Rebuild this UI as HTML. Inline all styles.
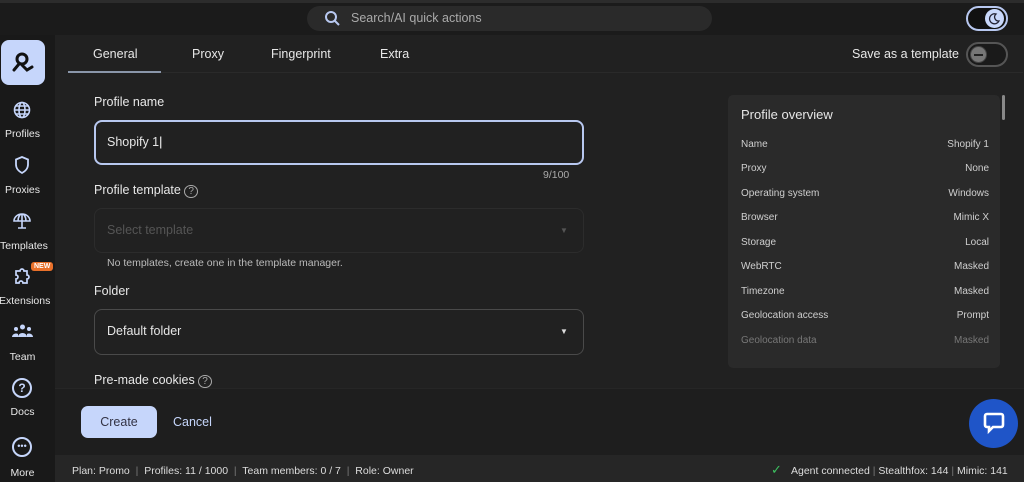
<!DOCTYPE html>
<html><head><meta charset="utf-8"><style>
*{box-sizing:border-box;margin:0;padding:0}
body{width:1024px;height:482px;background:#181818;font-family:"Liberation Sans",sans-serif;color:#e6e6e6;position:relative;overflow:hidden;font-size:13px}
.a{position:absolute}
.top{left:0;top:0;width:1024px;height:35px;background:#1b1b1b;border-top:3px solid #2c2c2c}
.side{left:0;top:35px;width:55px;height:447px;background:#191919}
.main{left:55px;top:35px;width:969px;height:420px;background:#212121}
.foot{left:55px;top:388px;width:969px;height:67px;background:#1e1e1e;border-top:1px solid #262626}
.status{left:55px;top:455px;width:969px;height:27px;background:#262626;font-size:11px;color:#ddd}
.nav{width:45px;text-align:center;font-size:10.5px;color:#e8e8e8}
.lbl{font-size:12.5px;color:#e8e8e8}
.row{left:741px;width:248px;font-size:10px;color:#cfcfcf;display:flex;justify-content:space-between}
</style></head><body>
<div class="a top"></div>
<div class="a" style="left:307px;top:6px;width:405px;height:25px;border-radius:13px;background:#2a2a2a"></div>
<svg class="a" style="left:324px;top:10px" width="17" height="17" viewBox="0 0 17 17"><circle cx="7" cy="7" r="5" stroke="#b8c8f0" stroke-width="2" fill="none"/><path d="M10.5 10.5L15 15" stroke="#b8c8f0" stroke-width="2"/></svg>
<div class="a" style="left:351px;top:11px;font-size:12.5px;color:#aaa">Search/AI quick actions</div>
<div class="a" style="left:966px;top:6px;width:42px;height:25px;border-radius:13px;border:2px solid #b8c8f0;background:#111"></div>
<div class="a" style="left:985px;top:9px;width:19px;height:19px;border-radius:50%;background:#c9d8fb"></div>
<svg class="a" style="left:988px;top:12px" width="13" height="13" viewBox="0 0 13 13"><path d="M8 2a5 5 0 1 0 3 7 4 4 0 0 1-3-7z" fill="none" stroke="#223" stroke-width="1.3"/></svg>
<div class="a side"></div>
<div class="a" style="left:1px;top:40px;width:44px;height:45px;border-radius:8px;background:#c6d6fb"></div>
<svg class="a" style="left:10px;top:50px" width="26" height="26" viewBox="0 0 26 26" fill="none" stroke="#111" stroke-width="3" stroke-linecap="round"><circle cx="12" cy="9" r="5"/><path d="M9 14L4 20M12 15l5 5 5-3"/></svg>
<svg class="a" style="left:13px;top:101px" width="18" height="18" viewBox="0 0 18 18" fill="none" stroke="#c6d6fb" stroke-width="1.6"><circle cx="9" cy="9" r="7.5"/><ellipse cx="9" cy="9" rx="3" ry="7.5"/><path d="M1.5 9h15M3 5h12M3 13h12"/></svg>
<div class="a nav" style="top:128px">Profiles</div>
<svg class="a" style="left:14px;top:156px" width="16" height="18" viewBox="0 0 16 18" fill="none" stroke="#c6d6fb" stroke-width="1.8"><path d="M8 1L2 3.5v5c0 4 3 7 6 8.5 3-1.5 6-4.5 6-8.5v-5z"/></svg>
<div class="a nav" style="top:184px">Proxies</div>
<svg class="a" style="left:12px;top:212px" width="20" height="18" viewBox="0 0 20 18" fill="none" stroke="#c6d6fb" stroke-width="1.6"><path d="M2 9a8 7 0 0 1 16 0zM6 9a4 7 0 0 1 8 0M10 2v7M10 9v7M6 16h8"/></svg>
<div class="a nav" style="top:240px">Templates</div>
<div class="a" style="left:31px;top:262px;background:#e8702a;color:#fff;font-size:7px;font-weight:bold;padding:1px 3px;border-radius:3px">NEW</div>
<svg class="a" style="left:13px;top:267px" width="18" height="18" viewBox="0 0 18 18" fill="none" stroke="#c6d6fb" stroke-width="1.7"><path d="M3 4h4a2 2 0 0 1 4 0h3v4a2 2 0 0 1 0 4v4h-4a2 2 0 0 0-4 0H3v-4a2 2 0 0 0 0-4z"/></svg>
<div class="a nav" style="top:295px;left:-1px;width:47px">Extensions</div>
<svg class="a" style="left:12px;top:324px" width="21" height="14" viewBox="0 0 21 14" fill="#c6d6fb"><circle cx="10.5" cy="3" r="2.5"/><circle cx="4" cy="5" r="2"/><circle cx="17" cy="5" r="2"/><path d="M6 13a4.5 4 0 0 1 9 0zM0 13a4 3.5 0 0 1 6-3v3zM21 13a4 3.5 0 0 0-6-3v3z"/></svg>
<div class="a nav" style="top:351px">Team</div>
<div class="a" style="left:12px;top:378px;width:20px;height:20px;border-radius:50%;border:2px solid #c6d6fb;color:#c6d6fb;text-align:center;font-size:12px;font-weight:bold;line-height:16px">?</div>
<div class="a nav" style="top:406px">Docs</div>
<div class="a" style="left:12px;top:437px;width:20px;height:20px;border-radius:50%;border:2px solid #c6d6fb;color:#c6d6fb;text-align:center;font-size:9px;line-height:14px">•••</div>
<div class="a nav" style="top:467px">More</div>
<div class="a main"></div>
<div class="a" style="left:68px;top:72px;width:955px;height:1px;background:#2a2a2a"></div>
<div class="a" style="left:68px;top:71px;width:93px;height:2px;background:#8a96aa"></div>
<div class="a lbl" style="left:93px;top:47px">General</div>
<div class="a lbl" style="left:192px;top:47px">Proxy</div>
<div class="a lbl" style="left:271px;top:47px">Fingerprint</div>
<div class="a lbl" style="left:380px;top:47px">Extra</div>
<div class="a lbl" style="left:852px;top:47px">Save as a template</div>
<div class="a" style="left:966px;top:42px;width:42px;height:25px;border-radius:13px;border:2px solid #555;background:#1a1a1a"></div>
<div class="a" style="left:970px;top:46px;width:17px;height:17px;border-radius:50%;background:#777;border:1px solid #444"></div>
<div class="a" style="left:974px;top:54px;width:9px;height:1.5px;background:#222"></div>
<div class="a lbl" style="left:94px;top:95px">Profile name</div>
<div class="a" style="left:94px;top:120px;width:490px;height:45px;border:2px solid #b8c8f0;border-radius:8px"></div>
<div class="a" style="left:107px;top:135px;font-size:12.5px">Shopify 1<span style="color:#fff">|</span></div>
<div class="a" style="left:543px;top:169px;font-size:10.5px;color:#aaa">9/100</div>
<div class="a lbl" style="left:94px;top:183px">Profile template <span style="font-size:10px;border:1px solid #aaa;border-radius:50%;padding:0 3px;color:#aaa">?</span></div>
<div class="a" style="left:94px;top:208px;width:490px;height:45px;border:1px solid #2c2c2c;border-radius:8px"></div>
<div class="a" style="left:107px;top:223px;font-size:12.5px;color:#555">Select template</div>
<div class="a" style="left:560px;top:226px;font-size:8px;color:#555">▼</div>
<div class="a" style="left:107px;top:257px;font-size:10.5px;color:#bbb">No templates, create one in the template manager.</div>
<div class="a lbl" style="left:94px;top:284px">Folder</div>
<div class="a" style="left:94px;top:309px;width:490px;height:46px;border:1px solid #4a4a4a;border-radius:8px"></div>
<div class="a" style="left:107px;top:324px;font-size:12.5px">Default folder</div>
<div class="a" style="left:560px;top:327px;font-size:8px;color:#ddd">▼</div>
<div class="a lbl" style="left:94px;top:373px">Pre-made cookies <span style="font-size:10px;border:1px solid #aaa;border-radius:50%;padding:0 3px;color:#aaa">?</span></div>
<div class="a" style="left:728px;top:95px;width:272px;height:273px;background:#2a2a2a;border-radius:5px"></div>
<div class="a" style="left:1002px;top:95px;width:3px;height:25px;background:#888;border-radius:2px"></div>
<div class="a" style="left:741px;top:107px;font-size:13px">Profile overview</div>
<div class="a row" style="top:139px"><span>Name</span><span>Shopify 1</span></div>
<div class="a row" style="top:163px"><span>Proxy</span><span>None</span></div>
<div class="a row" style="top:188px"><span>Operating system</span><span>Windows</span></div>
<div class="a row" style="top:212px"><span>Browser</span><span>Mimic X</span></div>
<div class="a row" style="top:237px"><span>Storage</span><span>Local</span></div>
<div class="a row" style="top:261px"><span>WebRTC</span><span>Masked</span></div>
<div class="a row" style="top:286px"><span>Timezone</span><span>Masked</span></div>
<div class="a row" style="top:310px"><span>Geolocation access</span><span>Prompt</span></div>
<div class="a row" style="top:335px;color:#777"><span>Geolocation data</span><span>Masked</span></div>
<div class="a foot"></div>
<div class="a" style="left:81px;top:406px;width:76px;height:32px;border-radius:7px;background:#c6d6fb;color:#334;font-size:12.5px;text-align:center;line-height:32px">Create</div>
<div class="a" style="left:173px;top:415px;font-size:12.5px;color:#c6d6fb">Cancel</div>
<div class="a" style="left:969px;top:399px;width:49px;height:49px;border-radius:50%;background:#1f55c8"></div>
<svg class="a" style="left:982px;top:411px" width="24" height="24" viewBox="0 0 24 24"><path d="M5 3h14a2 2 0 0 1 2 2v9a2 2 0 0 1-2 2h-8l-4 4v-4H5a2 2 0 0 1-2-2V5a2 2 0 0 1 2-2z" fill="none" stroke="#fff" stroke-width="2.6"/></svg>
<div class="a status"></div>
<div class="a" style="left:72px;top:465px;font-size:10.5px;color:#ddd;white-space:pre">Plan: Promo  <span style="color:#777">|</span>  Profiles: 11 / 1000  <span style="color:#777">|</span>  Team members: 0 / 7  <span style="color:#777">|</span>  Role: Owner</div>
<div class="a" style="left:771px;top:462px;font-size:13px;color:#3cc060">✓</div>
<div class="a" style="left:791px;top:465px;font-size:10.5px;color:#ddd;white-space:pre">Agent connected <span style="color:#777">|</span> Stealthfox: 144 <span style="color:#777">|</span> Mimic: 141</div>
</body></html>
